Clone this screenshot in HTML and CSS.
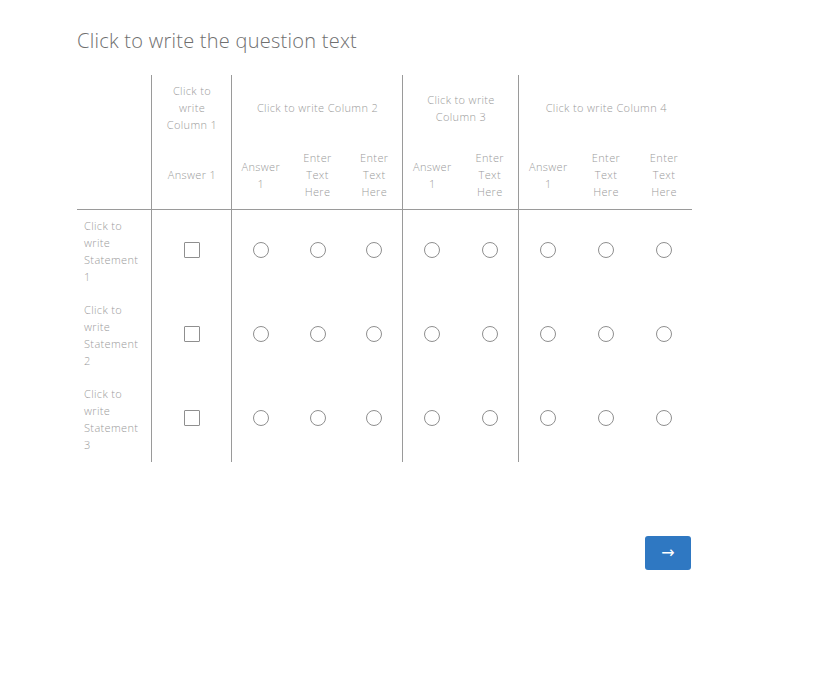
FILE: index.html
```html
<!DOCTYPE html>
<html>
<head>
<meta charset="utf-8">
<link rel="stylesheet" href="styles.css">
</head>
<body>
<div class="page">
  <h1 class="question">Click to write the question text</h1>
  <table class="matrix">
    <colgroup>
      <col class="w-stmt"><col class="w-c1">
      <col class="w-57"><col class="w-57"><col class="w-57">
      <col class="w-58"><col class="w-58">
      <col class="w-58"><col class="w-58"><col class="w-58">
    </colgroup>
    <thead>
      <tr>
        <th class="blank" rowspan="2"></th>
        <th class="grp">Click to<br>write<br>Column 1</th>
        <th class="grp" colspan="3">Click to write Column 2</th>
        <th class="grp" colspan="2">Click to write<br>Column 3</th>
        <th class="grp" colspan="3">Click to write Column 4</th>
      </tr>
      <tr class="subs">
        <th class="sep">Answer 1</th>
        <th>Answer<br>1</th><th>Enter<br>Text<br>Here</th><th class="sep">Enter<br>Text<br>Here</th>
        <th>Answer<br>1</th><th class="sep">Enter<br>Text<br>Here</th>
        <th>Answer<br>1</th><th>Enter<br>Text<br>Here</th><th class="last">Enter<br>Text<br>Here</th>
      </tr>
    </thead>
    <tbody>
      <tr>
        <td class="stmt">Click to<br>write<br>Statement<br>1</td>
        <td class="sep"><span class="box"></span></td>
        <td><span class="radio"></span></td><td><span class="radio"></span></td><td class="sep"><span class="radio"></span></td>
        <td><span class="radio"></span></td><td class="sep"><span class="radio"></span></td>
        <td><span class="radio"></span></td><td><span class="radio"></span></td><td class="last"><span class="radio"></span></td>
      </tr>
      <tr>
        <td class="stmt">Click to<br>write<br>Statement<br>2</td>
        <td class="sep"><span class="box"></span></td>
        <td><span class="radio"></span></td><td><span class="radio"></span></td><td class="sep"><span class="radio"></span></td>
        <td><span class="radio"></span></td><td class="sep"><span class="radio"></span></td>
        <td><span class="radio"></span></td><td><span class="radio"></span></td><td class="last"><span class="radio"></span></td>
      </tr>
      <tr>
        <td class="stmt">Click to<br>write<br>Statement<br>3</td>
        <td class="sep"><span class="box"></span></td>
        <td><span class="radio"></span></td><td><span class="radio"></span></td><td class="sep"><span class="radio"></span></td>
        <td><span class="radio"></span></td><td class="sep"><span class="radio"></span></td>
        <td><span class="radio"></span></td><td><span class="radio"></span></td><td class="last"><span class="radio"></span></td>
      </tr>
    </tbody>
  </table>
  <div class="nav">
    <button class="next" type="button">&rarr;</button>
  </div>
</div>
</body>
</html>
```
FILE: styles.css
```css
html, body {
  margin: 0;
  padding: 0;
  background: #ffffff;
}
.page {
  padding: 28px 0 0 77px;
  width: 615px;
  font-family: "Open Sans", "Liberation Sans", sans-serif;
  font-weight: 300;
}
.question {
  margin: 0 0 21px 0;
  font-size: 20px;
  line-height: 26px;
  font-weight: 300;
  color: #6f6f6f;
  letter-spacing: 0.25px;
}
.matrix {
  border-collapse: collapse;
  table-layout: fixed;
  width: 615px;
  font-size: 11px;
  line-height: 17px;
  color: #9b9b9b;
  letter-spacing: 0.35px;
}
.w-stmt { width: 74px; }
.w-c1 { width: 80px; }
.w-57 { width: 57px; }
.w-58 { width: 58px; }
.matrix th {
  font-weight: 300;
  padding: 7px 2px 9px 4px;
  text-align: center;
  vertical-align: middle;
  height: 51px;
}
.matrix th.grp,
.matrix th.sep,
.matrix td.sep,
.matrix td.stmt {
  border-right: 1px solid #9a9a9a;
}
.matrix th.blank {
  border-right: 1px solid #9a9a9a;
  border-bottom: 1px solid #9a9a9a;
}
.matrix th.grp:last-child { border-right: none; }
.subs th { border-bottom: 1px solid #9a9a9a; }
.matrix td {
  padding: 7px 0 9px 2px;
  height: 68px;
  text-align: center;
  vertical-align: top;
}
.matrix td.stmt {
  text-align: left;
  padding-left: 7px;
}
.box, .radio {
  display: inline-block;
  box-sizing: border-box;
  width: 16px;
  height: 16px;
  border: 1px solid #8f8f8f;
  margin-top: 25px;
  vertical-align: top;
}
.box { border-radius: 1px; }
.radio { border-radius: 50%; }
.nav {
  display: flex;
  justify-content: flex-end;
  margin-top: 74px;
  padding-right: 1px;
}
.next {
  width: 46px;
  height: 34px;
  border: none;
  border-radius: 3px;
  background: #2f78c2;
  color: #ffffff;
  font-size: 16px;
  font-family: "DejaVu Sans", sans-serif;
  line-height: 34px;
  padding: 0;
}
```
